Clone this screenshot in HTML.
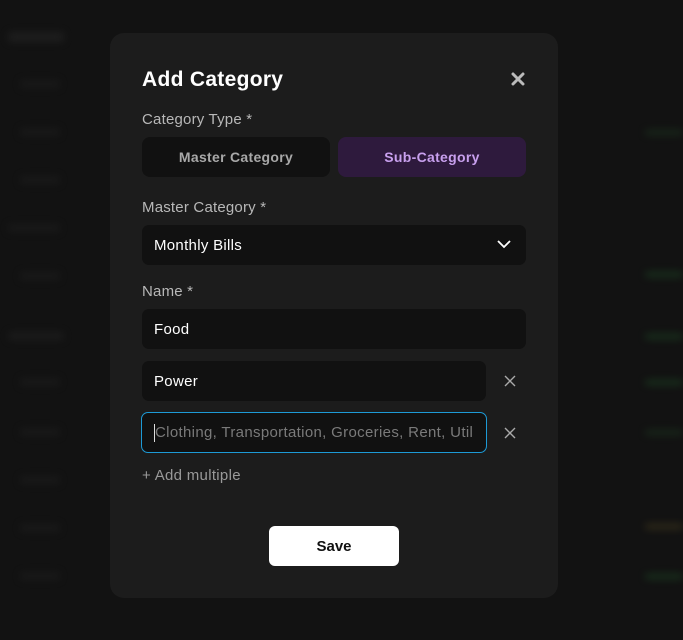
<!DOCTYPE html>
<html><head><style>
*{box-sizing:border-box;margin:0;padding:0}
body{width:683px;height:640px;background:#121212;font-family:"Liberation Sans",sans-serif;position:relative;overflow:hidden}
.bg{position:absolute;filter:blur(4px);border-radius:3px;opacity:.6}
.modal{position:absolute;left:110px;top:33px;width:448px;height:565px;background:#1c1c1c;border-radius:14px}
.a{position:absolute}
.lbl{color:#b8b8b8;font-size:15px;letter-spacing:.2px}
.inp{background:#111;border-radius:7px;color:#fff;font-size:15px;padding-left:12px;display:flex;align-items:center;letter-spacing:.3px}
</style></head><body>
<div class="bg" style="left:8px;top:32px;width:56px;height:10px;background:#262626"></div>
<div class="bg" style="left:20px;top:80px;width:40px;height:8px;background:#1e1e1e"></div>
<div class="bg" style="left:20px;top:128px;width:40px;height:8px;background:#1e1e1e"></div>
<div class="bg" style="left:20px;top:176px;width:40px;height:8px;background:#1e1e1e"></div>
<div class="bg" style="left:8px;top:224px;width:52px;height:8px;background:#1e1e1e"></div>
<div class="bg" style="left:20px;top:272px;width:40px;height:8px;background:#1e1e1e"></div>
<div class="bg" style="left:8px;top:332px;width:56px;height:8px;background:#222"></div>
<div class="bg" style="left:20px;top:378px;width:40px;height:8px;background:#1e1e1e"></div>
<div class="bg" style="left:20px;top:428px;width:40px;height:8px;background:#1e1e1e"></div>
<div class="bg" style="left:20px;top:476px;width:40px;height:8px;background:#1e1e1e"></div>
<div class="bg" style="left:20px;top:524px;width:40px;height:8px;background:#1e1e1e"></div>
<div class="bg" style="left:20px;top:572px;width:40px;height:8px;background:#1e1e1e"></div>
<div class="bg" style="left:645px;top:130px;width:38px;height:5px;background:#1f3a22"></div>
<div class="bg" style="left:645px;top:272px;width:38px;height:5px;background:#1f4a26"></div>
<div class="bg" style="left:645px;top:334px;width:38px;height:5px;background:#1f4a26"></div>
<div class="bg" style="left:645px;top:380px;width:38px;height:5px;background:#1f4a26"></div>
<div class="bg" style="left:645px;top:430px;width:38px;height:5px;background:#1f3a22"></div>
<div class="bg" style="left:645px;top:524px;width:38px;height:5px;background:#4a4020"></div>
<div class="bg" style="left:645px;top:574px;width:38px;height:5px;background:#1f4a26"></div>
<div class="modal"></div>
<div class="a" style="left:142px;top:68px;color:#fff;font-size:21px;font-weight:bold;letter-spacing:.3px">Add Category</div>
<svg class="a" style="left:511px;top:72px" width="14" height="14"><path d="M2 2L12 12M12 2L2 12" stroke="#bbb" stroke-width="3" stroke-linecap="round"/></svg>
<div class="a lbl" style="left:142px;top:111px">Category Type *</div>
<div class="a" style="left:142px;top:137px;width:188px;height:40px;background:#111;border-radius:8px;color:#a8a8a8;font-size:14px;font-weight:bold;display:flex;align-items:center;justify-content:center;letter-spacing:.3px">Master Category</div>
<div class="a" style="left:338px;top:137px;width:188px;height:40px;background:#2e1a3d;border-radius:8px;color:#c8a0ee;font-size:14px;font-weight:bold;display:flex;align-items:center;justify-content:center;letter-spacing:.3px">Sub-Category</div>
<div class="a lbl" style="left:142px;top:199px">Master Category *</div>
<div class="a inp" style="left:142px;top:225px;width:384px;height:40px">Monthly Bills</div>
<svg class="a" style="left:497px;top:239px" width="14" height="10"><path d="M1 2L7 8L13 2" stroke="#fff" stroke-width="1.8" fill="none"/></svg>
<div class="a lbl" style="left:142px;top:283px">Name *</div>
<div class="a inp" style="left:142px;top:309px;width:384px;height:40px">Food</div>
<div class="a inp" style="left:142px;top:361px;width:344px;height:40px">Power</div>
<svg class="a" style="left:504px;top:375px" width="12" height="12"><path d="M1 1L11 11M11 1L1 11" stroke="#aaa" stroke-width="1.4"/></svg>
<div class="a inp" style="left:141px;top:412px;width:346px;height:41px;border:1px solid #1d9ad6;color:#7a7a7a;white-space:nowrap;overflow:hidden;letter-spacing:.33px"><span style="border-left:1px solid #ddd;height:18px;display:inline-block"></span>Clothing, Transportation, Groceries, Rent, Util</div>
<svg class="a" style="left:504px;top:427px" width="12" height="12"><path d="M1 1L11 11M11 1L1 11" stroke="#aaa" stroke-width="1.4"/></svg>
<div class="a" style="left:142px;top:467px;color:#999;font-size:15px;letter-spacing:.3px">+ Add multiple</div>
<div class="a" style="left:269px;top:526px;width:130px;height:40px;background:#fff;border-radius:6px;color:#111;font-size:15px;font-weight:bold;display:flex;align-items:center;justify-content:center">Save</div>
</body></html>
